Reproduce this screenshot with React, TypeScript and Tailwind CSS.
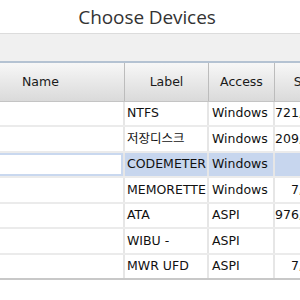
import React from 'react';

interface Device {
  label: string;
  access: string;
  size: string;
}

const DEVICES: Device[] = [
  { label: 'NTFS', access: 'Windows', size: '721,568 MB' },
  { label: '저장디스크', access: 'Windows', size: '209,715 MB' },
  { label: 'CODEMETER', access: 'Windows', size: '' },
  { label: 'MEMORETTE', access: 'Windows', size: '\u2007\u20077,641 MB' },
  { label: 'ATA', access: 'ASPI', size: '976,762 MB' },
  { label: 'WIBU -', access: 'ASPI', size: '' },
  { label: 'MWR UFD', access: 'ASPI', size: '\u2007\u20077,839 MB' },
];

const SELECTED = 2;

// Row lines fall at 127, 153, 178, 204 ... so heights alternate 25 / 26
const ROW_HEIGHTS = ['h-[25px]', 'h-[26px]'];

export default function App() {
  return (
    <div
      className="w-[300px] h-[300px] overflow-hidden bg-white"
      style={{ fontFamily: '"DejaVu Sans", "Noto Sans CJK KR", sans-serif' }}
    >
      {/* Dialog title */}
      <div
        className="h-[33px] flex items-center justify-center text-[19px] tracking-[-0.1px] text-[#333] bg-white"
        style={{ fontFamily: '"Open Sans", "Noto Sans", sans-serif' }}
      >
        <span className="pt-[1px] pr-[6px]">Choose Devices</span>
      </div>

      {/* Toolbar band */}
      <div className="h-[28px] border-t border-[#dcdcdc] bg-[#f0f0f0]" />
      <div className="h-[2px] bg-[#b4c2d2]" />

      {/* Column headers */}
      <div className="h-[39px] flex w-[360px] bg-linear-to-b from-[#f7f7f7] to-[#dadada] border-b border-[#c4c4c4] text-[12.5px] text-[#1a1a1a]">
        <div className="w-[125px] shrink-0 flex items-center pl-[22px] border-r border-[#bcbcbc]">Name</div>
        <div className="w-[84px] shrink-0 flex items-center justify-center border-r border-[#bcbcbc]">Label</div>
        <div className="w-[66px] shrink-0 flex items-center justify-center border-r border-[#bcbcbc]">Access</div>
        <div className="w-[63px] shrink-0 flex items-center justify-center">Size</div>
      </div>

      {/* Rows */}
      <div className="w-[360px] text-[12.5px] text-[#111]">
        {DEVICES.map((d, i) => {
          const sel = i === SELECTED;
          const last = i === DEVICES.length - 1;
          return (
            <div
              key={i}
              className={`${ROW_HEIGHTS[i % 2]} flex border-b-2 ${last ? 'border-[#c8c8c8]' : 'border-[#ebebeb]'}`}
            >
              {sel ? (
                <div className="w-[125px] shrink-0 flex">
                  <div className="flex-1 bg-white border-y-2 border-r-2 border-[#c9d8ef]" />
                  <div className="w-[2px] bg-[#e6e6e6]" />
                </div>
              ) : (
                <div className="w-[125px] shrink-0 border-r-2 border-[#e6e6e6]" />
              )}
              <div
                className={`w-[84px] shrink-0 flex items-center pl-[2px] overflow-hidden whitespace-nowrap border-r-2 border-[#e6e6e6] ${
                  sel ? 'bg-[#c7d6ee]' : ''
                }`}
              >
                {d.label}
              </div>
              <div
                className={`w-[66px] shrink-0 flex items-center pl-[3px] whitespace-nowrap border-r-2 border-[#e6e6e6] ${
                  sel ? 'bg-[#c7d6ee]' : ''
                }`}
              >
                {d.access}
              </div>
              <div
                className={`w-[85px] shrink-0 flex items-center whitespace-pre ${
                  sel ? 'bg-[#c7d6ee]' : ''
                }`}
              >
                {d.size}
              </div>
            </div>
          );
        })}
      </div>
    </div>
  );
}
